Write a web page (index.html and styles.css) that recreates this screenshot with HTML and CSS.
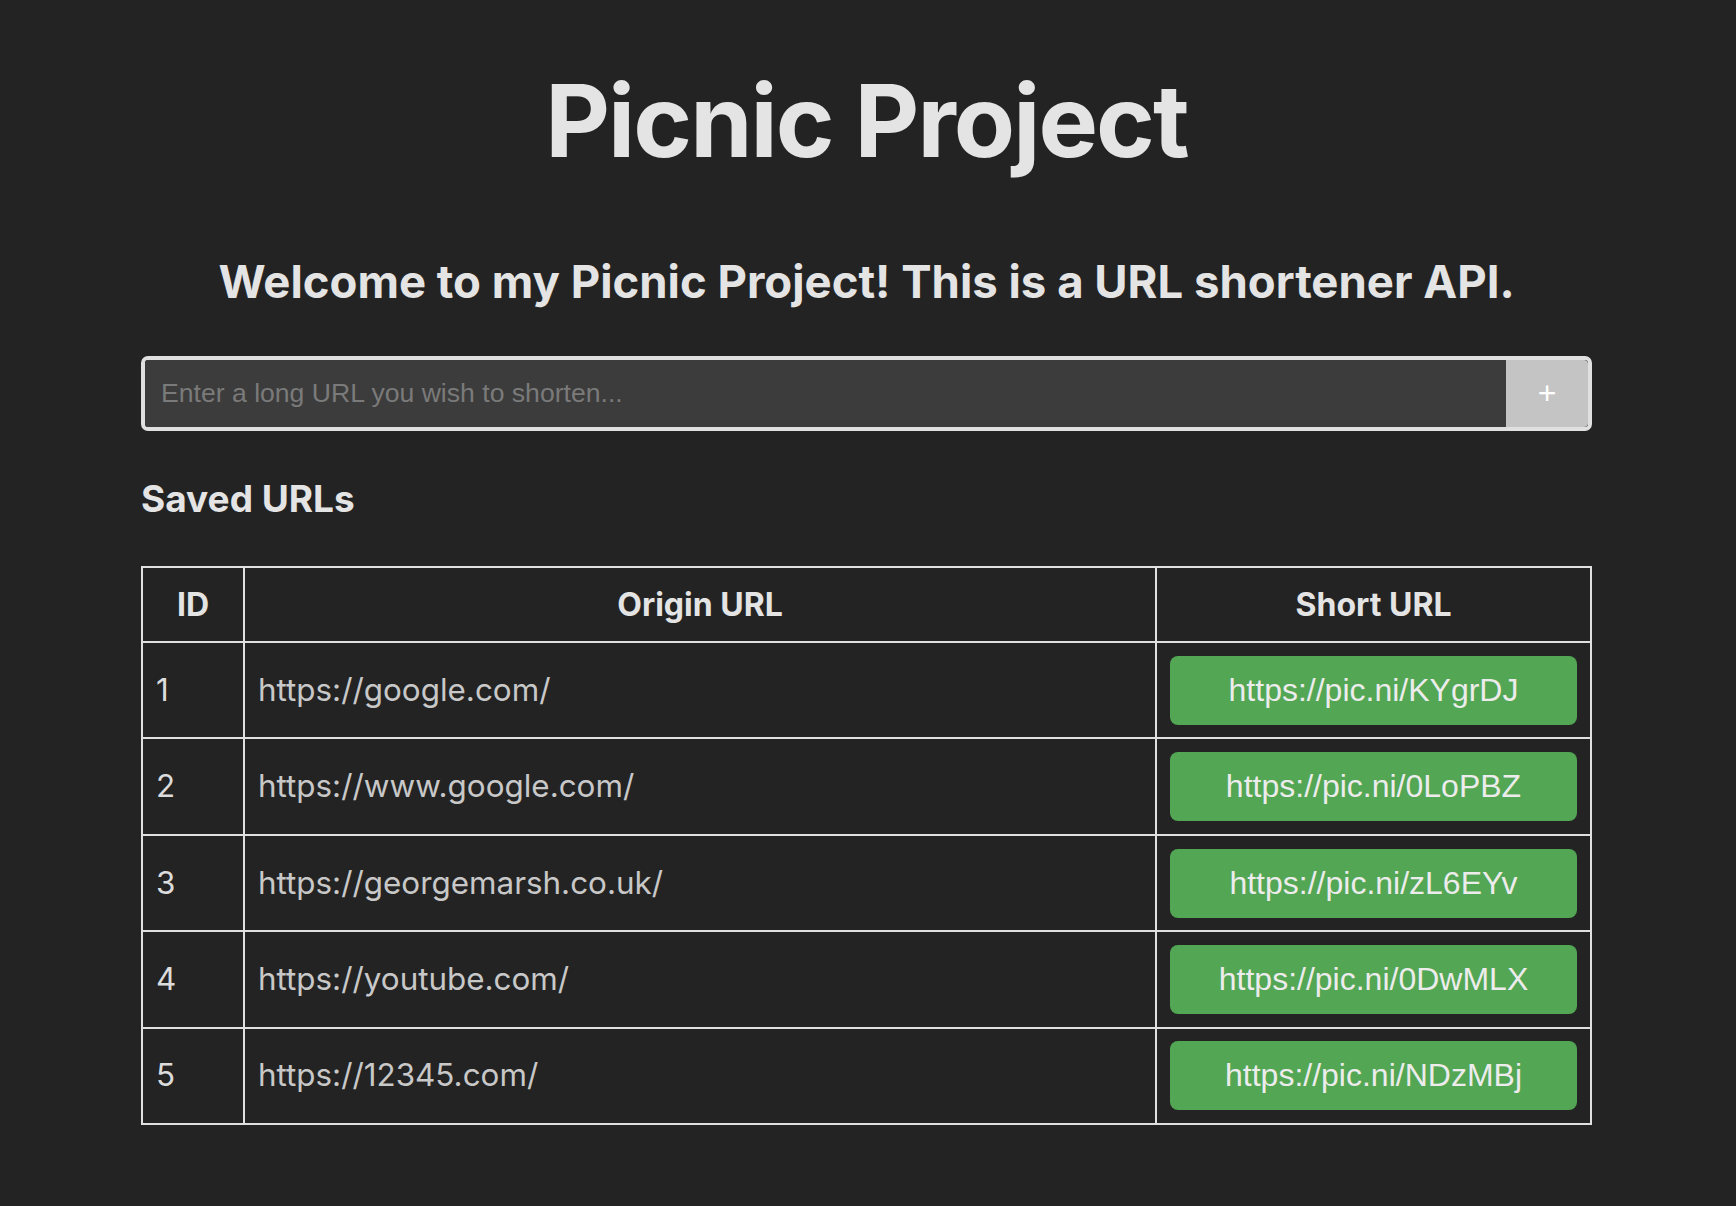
FILE: index.html
```html
<!DOCTYPE html>
<html lang="en">
<head>
<meta charset="utf-8">
<title>Picnic Project</title>
<link rel="stylesheet" href="styles.css">
</head>
<body>
<main class="page">
  <h1 class="title">Picnic Project</h1>
  <h2 class="subtitle">Welcome to my Picnic Project! This is a URL shortener API.</h2>
  <form class="shorten">
    <input class="shorten-input" type="text" placeholder="Enter a long URL you wish to shorten...">
    <button class="shorten-btn" type="button">+</button>
  </form>
  <h3 class="section-title">Saved URLs</h3>
  <table class="urls">
    <thead>
      <tr>
        <th class="col-id">ID</th>
        <th class="col-origin">Origin URL</th>
        <th class="col-short">Short URL</th>
      </tr>
    </thead>
    <tbody>
      <tr><td class="cell-id">1</td><td class="cell-origin">https://google.com/</td><td class="cell-short"><button class="short-btn" type="button">https://pic.ni/KYgrDJ</button></td></tr>
      <tr><td class="cell-id">2</td><td class="cell-origin">https://www.google.com/</td><td class="cell-short"><button class="short-btn" type="button">https://pic.ni/0LoPBZ</button></td></tr>
      <tr><td class="cell-id">3</td><td class="cell-origin">https://georgemarsh.co.uk/</td><td class="cell-short"><button class="short-btn" type="button">https://pic.ni/zL6EYv</button></td></tr>
      <tr><td class="cell-id">4</td><td class="cell-origin">https://youtube.com/</td><td class="cell-short"><button class="short-btn" type="button">https://pic.ni/0DwMLX</button></td></tr>
      <tr><td class="cell-id">5</td><td class="cell-origin">https://12345.com/</td><td class="cell-short"><button class="short-btn" type="button">https://pic.ni/NDzMBj</button></td></tr>
    </tbody>
  </table>
</main>
</body>
</html>
```
FILE: styles.css
```css
html, body {
  margin: 0;
  padding: 0;
  background: #232323;
}
body {
  font-family: Inter, "Noto Sans", sans-serif;
  color: #e4e4e4;
}
.page {
  width: 1451px;
  margin: 0 0 0 141px;
  padding-top: 61px;
  padding-bottom: 60px;
  box-sizing: border-box;
}
.title {
  margin: 0;
  font-size: 100px;
  line-height: 120px;
  font-weight: 700;
  letter-spacing: -1.9px;
  text-align: center;
  color: #e4e4e4;
}
.subtitle {
  margin: 74px 0 0;
  font-size: 45.5px;
  line-height: 54px;
  font-weight: 700;
  text-align: center;
  color: #e4e4e4;
}
.shorten {
  margin-top: 47px;
  display: flex;
  height: 75px;
  box-sizing: border-box;
  border: 4px solid #e0e0e0;
  border-radius: 7px;
  background: #3c3c3c;
  overflow: hidden;
}
.shorten-input {
  flex: 1;
  min-width: 0;
  border: 0;
  outline: none;
  background: #3c3c3c;
  padding: 0 16px;
  font-family: "Liberation Sans", Arial, sans-serif;
  font-size: 26.6px;
  color: #e0e0e0;
}
.shorten-input::placeholder {
  color: #7a7a7a;
}
.shorten-btn {
  width: 82px;
  border: 0;
  border-radius: 0 4px 4px 0;
  background: #c4c4c4;
  color: #ffffff;
  font-family: "Liberation Sans", Arial, sans-serif;
  font-size: 32px;
  padding: 0;
}
.section-title {
  margin: 46px 0 0;
  font-size: 37px;
  line-height: 44px;
  font-weight: 700;
  color: #e4e4e4;
}
.urls {
  margin-top: 45px;
  width: 100%;
  border-collapse: collapse;
  border: 2px solid #e0e0e0;
  font-size: 31.4px;
}
.urls th, .urls td {
  border: 2px solid #e0e0e0;
}
.urls th {
  padding: 18px 13px;
  line-height: 37px;
  font-size: 32px;
  font-weight: 700;
  text-align: center;
  color: #e4e4e4;
}
.col-id { width: 74px; }
.col-short { width: 407px; }
.urls td {
  padding: 12.8px 13px 12.6px;
  line-height: 37px;
  text-align: left;
}
.cell-id { color: #dcdcdc; }
.cell-origin { color: #c8c8c8; }
.cell-short { padding-left: 13px; padding-right: 12px; }
.short-btn {
  display: block;
  width: 100%;
  height: 69px;
  border: 0;
  border-radius: 8px;
  background: #53a653;
  color: #ececec;
  font-family: "Liberation Sans", Arial, sans-serif;
  font-size: 32px;
  line-height: 37px;
  padding: 0;
}
```
